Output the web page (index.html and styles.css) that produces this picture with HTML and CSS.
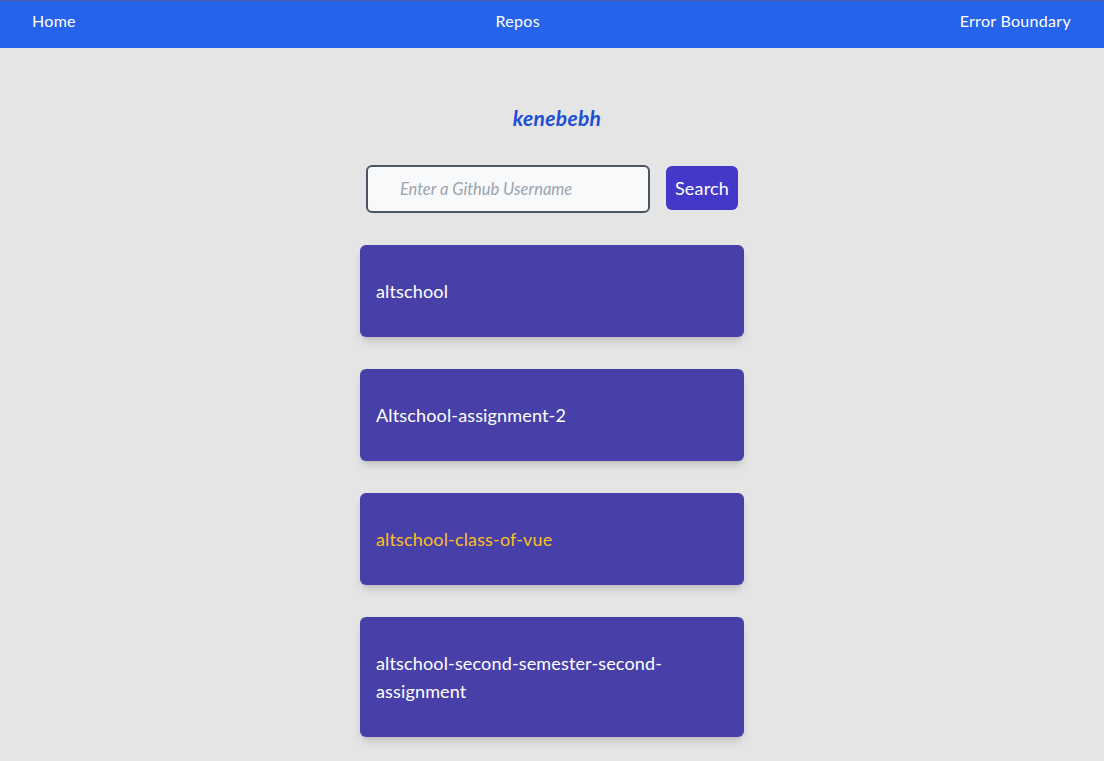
FILE: index.html
```html
<!DOCTYPE html>
<html lang="en">
<head>
<meta charset="utf-8">
<title>Repos</title>
<link rel="stylesheet" href="styles.css">
</head>
<body>
<nav class="nav">
  <a class="nav-link" href="#">Home</a>
  <a class="nav-link" href="#">Repos</a>
  <a class="nav-link" href="#">Error Boundary</a>
</nav>
<main class="main">
  <h1 class="user">kenebebh</h1>
  <form class="search">
    <input class="search-input" type="text" placeholder="Enter a Github Username">
    <button class="search-btn" type="button">Search</button>
  </form>
  <ul class="repos">
    <li class="repo">altschool</li>
    <li class="repo">Altschool-assignment-2</li>
    <li class="repo repo-active">altschool-class-of-vue</li>
    <li class="repo">altschool-second-semester-second-assignment</li>
  </ul>
</main>
</body>
</html>
```
FILE: styles.css
```css
* { box-sizing: border-box; }
html, body { margin: 0; padding: 0; }
body {
  background: #e5e5e5;
  font-family: "Lato", "Noto Sans", sans-serif;
  color: #fff;
  overflow: hidden;
  height: 761px;
}
.nav {
  display: flex;
  justify-content: space-between;
  align-items: flex-start;
  height: 48px;
  padding: 8px 33px 0 32px;
  background: #2563eb;
  border-top: 1px solid #4a5c9c;
}
.nav-link {
  color: #fff;
  text-decoration: none;
  font-size: 16px;
  line-height: 24px;
  letter-spacing: 0.3px;
}
.main {
  display: flex;
  flex-direction: column;
  align-items: center;
  padding-top: 56px;
}
.user {
  margin: 0 0 0 10px;
  font-size: 21px;
  line-height: 28px;
  font-style: italic;
  font-weight: 700;
  color: #1d4ed8;
  letter-spacing: 0.3px;
}
.search {
  display: flex;
  align-items: center;
  gap: 16px;
  margin: 33px 0 0;
}
.search-input {
  width: 284px;
  height: 48px;
  border: 2px solid #4b5563;
  border-radius: 6px;
  background: #f8f9fa;
  padding: 0 32px;
  font-family: inherit;
  font-size: 16.5px;
  font-style: italic;
  color: #374151;
  outline: none;
}
.search-input::placeholder { color: #9ca3af; }
.search-btn {
  height: 44px;
  padding: 0 9px;
  border: none;
  border-radius: 6px;
  background: #4338ca;
  color: #fff;
  font-family: inherit;
  font-size: 18px;
  letter-spacing: 0.2px;
  margin-top: -2px;
}
.repos {
  list-style: none;
  margin: 32px 0 0;
  padding: 0;
  width: 384px;
  display: flex;
  flex-direction: column;
  gap: 32px;
}
.repo {
  background: #4840a9;
  border-radius: 6px;
  padding: 32px 16px;
  font-size: 18px;
  line-height: 28px;
  letter-spacing: 0.15px;
  box-shadow: 0 6px 10px -2px rgba(0,0,0,0.15), 0 2px 4px -2px rgba(0,0,0,0.1);
}
.repo-active { color: #fbbf24; }
```
